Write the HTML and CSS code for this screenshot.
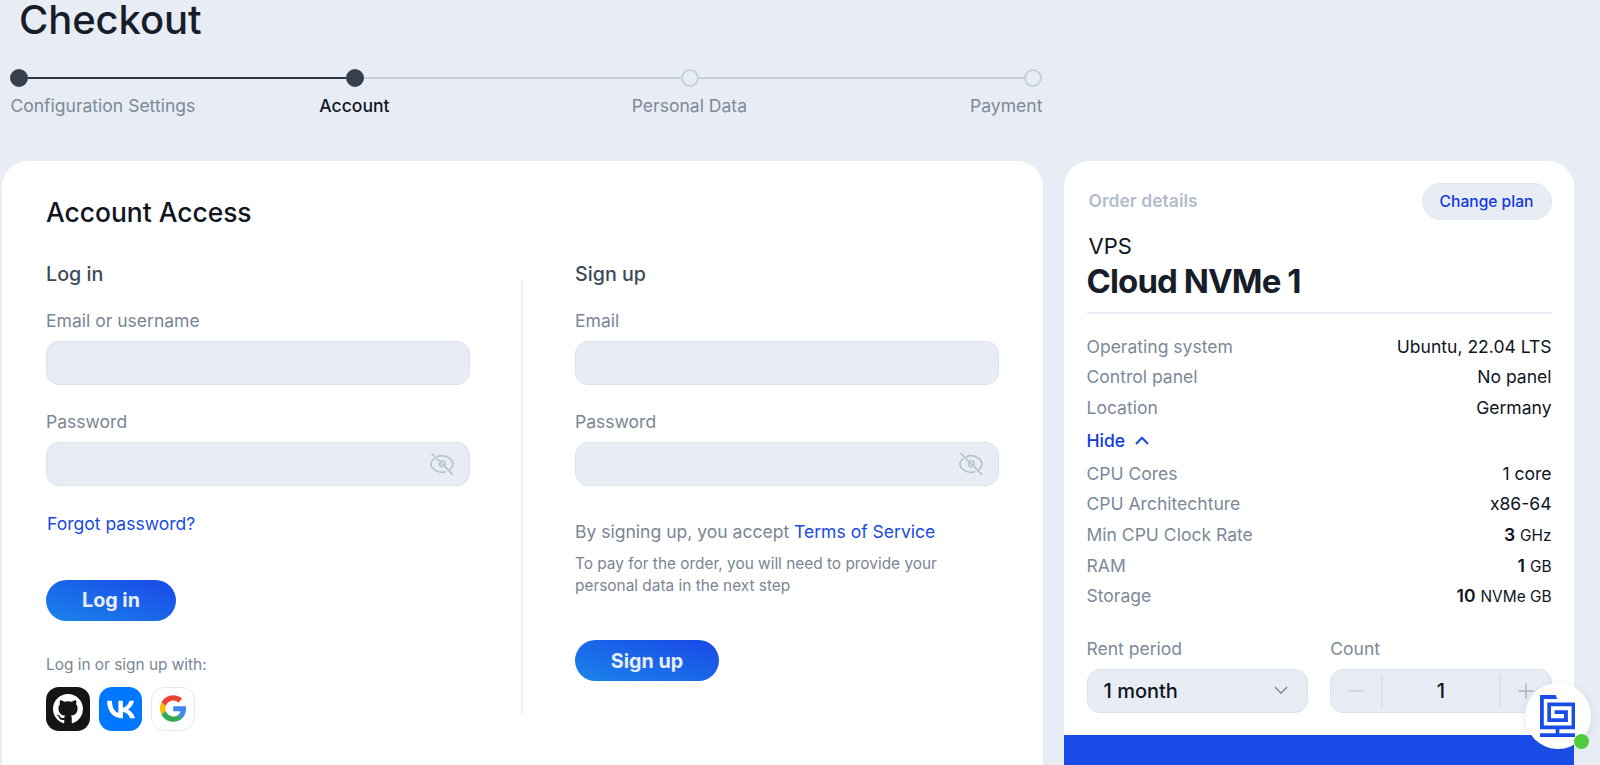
FILE: index.html
```html
<!DOCTYPE html>
<html lang="en">
<head>
    <meta charset="UTF-8">
    <meta name="viewport" content="width=device-width, initial-scale=1.0">
    <title>Checkout</title>
    <link rel="stylesheet" href="styles.css">
</head>
<body>

<svg class="sprite" aria-hidden="true">
    <symbol id="eye-off" viewBox="0 0 24 22">
        <path d="M2 .8L22.600 21.400M7.600 3.400C8.900 2.900 10.300 2.600 12 2.600c6 0 11 4.600 11 8.400 0 1.800-1.200 4-3.300 5.700M4 5.900C2.100 7.400 1 9.300 1 11c0 3.800 5 8.400 11 8.400 1.300 0 2.500-.2 3.600-.6M10.600 8.100C11 7.900 11.500 7.800 12 7.800c1.800 0 3.200 1.400 3.200 3.200 0 .4 0 .7-.2 1.100M9.500 10.500c-.3 1.700.9 3.300 2.700 3.400"/>
    </symbol>
</svg>

<h1 class="page-title">Checkout</h1>

<div class="stepper">
    <div class="track">
        <span class="dot done"></span>
        <span class="line done"></span>
        <span class="dot done"></span>
        <span class="line"></span>
        <span class="dot"></span>
        <span class="line last"></span>
        <span class="dot"></span>
    </div>
    <div class="step-labels">
        <span>Configuration Settings</span>
        <span class="current">Account</span>
        <span>Personal Data</span>
        <span>Payment</span>
    </div>
</div>

<main class="layout">
    <section class="card account">
        <h2 class="card-title">Account Access</h2>
        <div class="forms">
            <form class="form">
                <h3 class="form-title">Log in</h3>
                <div class="field">
                    <label for="login">Email or username</label>
                    <div class="input-box"><input type="text" id="login"></div>
                </div>
                <div class="field">
                    <label for="loginPassword">Password</label>
                    <div class="input-box">
                        <input type="password" id="loginPassword">
                        <svg class="eye"><use href="#eye-off"/></svg>
                    </div>
                </div>
                <a href="#" class="forgot">Forgot password?</a>
                <button type="button" class="btn btn-login">Log in</button>
                <p class="social-text">Log in or sign up with:</p>
                <div class="socials">
                    <a href="#" class="social github" aria-label="GitHub">
                        <svg width="30" height="30" viewBox="0 0 16 16"><path fill="#fff" d="M8 0C3.58 0 0 3.58 0 8c0 3.54 2.29 6.53 5.47 7.59.4.07.55-.17.55-.38 0-.19-.01-.82-.01-1.49-2.01.37-2.53-.49-2.69-.94-.09-.23-.48-.94-.82-1.13-.28-.15-.68-.52-.01-.53.63-.01 1.08.58 1.23.82.72 1.21 1.87.87 2.33.66.07-.52.28-.87.51-1.07-1.78-.2-3.64-.89-3.64-3.95 0-.87.31-1.59.82-2.15-.08-.2-.36-1.02.08-2.12 0 0 .67-.21 2.2.82.64-.18 1.32-.27 2-.27s1.36.09 2 .27c1.53-1.04 2.2-.82 2.2-.82.44 1.1.16 1.92.08 2.12.51.56.82 1.27.82 2.15 0 3.07-1.87 3.75-3.65 3.95.29.25.54.73.54 1.48 0 1.07-.01 1.93-.01 2.2 0 .21.15.46.55.38A8.01 8.01 0 0 0 16 8c0-4.42-3.58-8-8-8z"/></svg>
                    </a>
                    <a href="#" class="social vk" aria-label="VK">
                        <svg width="42" height="44" viewBox="0 0 48 48"><path fill="#fff" d="M25.54 34.58c-10.94 0-17.18-7.5-17.44-19.98h5.48c.18 9.16 4.22 13.04 7.42 13.84V14.6h5.16v7.9c3.16-.34 6.48-3.94 7.6-7.9h5.16c-.86 4.88-4.46 8.48-7.02 9.96 2.56 1.2 6.66 4.34 8.22 10.02h-5.68c-1.22-3.8-4.26-6.74-8.28-7.14v7.14z"/></svg>
                    </a>
                    <a href="#" class="social google" aria-label="Google">
                        <svg width="26" height="27" viewBox="0 0 47 48">
                            <path fill="#ea4335" d="M24 9.5c3.54 0 6.71 1.22 9.21 3.6l6.85-6.85C35.9 2.38 30.47 0 24 0 14.62 0 6.51 5.38 2.56 13.22l7.98 6.19C12.43 13.72 17.74 9.5 24 9.5z"/>
                            <path fill="#4285f4" d="M46.98 24.55c0-1.57-.15-3.09-.38-4.55H24v9.02h12.94c-.58 2.96-2.26 5.48-4.78 7.18l7.73 6c4.51-4.18 7.09-10.36 7.09-17.65z"/>
                            <path fill="#fbbc05" d="M10.53 28.59c-.48-1.45-.76-2.99-.76-4.59s.27-3.14.76-4.59l-7.98-6.19C.92 16.46 0 20.12 0 24c0 3.88.92 7.54 2.56 10.78l7.97-6.19z"/>
                            <path fill="#34a853" d="M24 48c6.48 0 11.93-2.13 15.89-5.81l-7.73-6c-2.15 1.45-4.92 2.3-8.16 2.3-6.26 0-11.57-4.22-13.47-9.91l-7.98 6.19C6.51 42.62 14.62 48 24 48z"/>
                        </svg>
                    </a>
                </div>
            </form>

            <div class="divider"></div>

            <form class="form">
                <h3 class="form-title">Sign up</h3>
                <div class="field">
                    <label for="email">Email</label>
                    <div class="input-box"><input type="text" id="email"></div>
                </div>
                <div class="field">
                    <label for="signupPassword">Password</label>
                    <div class="input-box">
                        <input type="password" id="signupPassword">
                        <svg class="eye"><use href="#eye-off"/></svg>
                    </div>
                </div>
                <p class="terms">By signing up, you accept <a href="#">Terms of Service</a></p>
                <p class="note">To pay for the order, you will need to provide your personal data in the next step</p>
                <button type="button" class="btn btn-signup">Sign up</button>
            </form>
        </div>
    </section>

    <aside class="card order">
        <div class="order-body">
            <div class="order-head">
                <span class="order-caption">Order details</span>
                <button type="button" class="change-plan">Change plan</button>
            </div>
            <div class="product-type">VPS</div>
            <h2 class="product-name">Cloud NVMe 1</h2>
            <dl class="specs">
                <div><dt>Operating system</dt><dd>Ubuntu, 22.04 LTS</dd></div>
                <div><dt>Control panel</dt><dd>No panel</dd></div>
                <div><dt>Location</dt><dd>Germany</dd></div>
            </dl>
            <a href="#" class="toggle">Hide
                <svg width="14" height="9" viewBox="0 0 14 9"><path d="M1 8l6-6.2L13 8"/></svg>
            </a>
            <dl class="specs">
                <div><dt>CPU Cores</dt><dd>1 core</dd></div>
                <div><dt>CPU Architechture</dt><dd>x86-64</dd></div>
                <div><dt>Min CPU Clock Rate</dt><dd><b>3</b> <small>GHz</small></dd></div>
                <div><dt>RAM</dt><dd><b>1</b> <small>GB</small></dd></div>
                <div><dt>Storage</dt><dd><b>10</b> <small>NVMe GB</small></dd></div>
            </dl>
            <div class="options">
                <div class="option">
                    <span class="option-label">Rent period</span>
                    <div class="select">1 month
                        <svg width="14" height="9" viewBox="0 0 14 9"><path d="M1 1l6 6.2L13 1"/></svg>
                    </div>
                </div>
                <div class="option">
                    <span class="option-label">Count</span>
                    <div class="counter">
                        <span class="count-btn minus"><svg width="16" height="16" viewBox="0 0 16 16"><path d="M.5 8h15"/></svg></span>
                        <span class="count-value">1</span>
                        <span class="count-btn"><svg width="16" height="16" viewBox="0 0 16 16"><path d="M.5 8h15M8 .5v15"/></svg></span>
                    </div>
                </div>
            </div>
        </div>
        <div class="order-total"></div>
    </aside>
</main>

<!-- Support chat -->
<div class="chat">
    <svg width="35.5" height="42" viewBox="0 0 35.5 42">
        <path d="M15.700 0H0V34.200H35.500V7.400H7.300V27H27.900V15.200H14.600V19H24V23.200H11V11.200H31.600V30.500H3.800V4H17.200z"/>
        <path d="M15.700 34h3.600v4.200h16.200V42H0v-3.800h15.700z"/>
    </svg>
    <span class="online"></span>
</div>

</body>
</html>
```
FILE: styles.css
```css
* {
    box-sizing: border-box;
}

body {
    margin: 0;
    height: 765px;
    overflow: hidden;
    background-color: #e8edf5;
    font-family: Inter, "Liberation Sans", sans-serif;
    font-size: 17.55px;
    line-height: 24px;
    color: #10141f;
}

h1, h2, h3, p, dl, dd {
    margin: 0;
}

a {
    color: #1a4be0;
    text-decoration: none;
}

.sprite {
    display: none;
}

.page-title {
    padding-left: 19px;
    font-size: 40px;
    line-height: 40px;
    font-weight: 550;
    letter-spacing: -0.1px;
    color: #181e29;
}

/* Stepper */
.stepper {
    width: 1032px;
    margin: 29px 0 42.5px 10.4px;
}

.track {
    display: flex;
    align-items: center;
}

.dot {
    flex: none;
    width: 18px;
    height: 18px;
    border: 2px solid #c7cfde;
    border-radius: 50%;
}

.dot.done {
    border-color: #37404e;
    background-color: #37404e;
}

.line {
    flex: 0 0 317.3px;
    height: 2.5px;
    background-color: #c7cfde;
}

.line.done {
    background-color: #2b3747;
}

.line.last {
    flex: 1;
}

.step-labels {
    display: grid;
    grid-template-columns: 176.5px 335px 335px 185.5px;
    margin-top: 7px;
    padding-bottom: 0.5px;
    text-align: center;
    white-space: nowrap;
    color: #7d8998;
}

.step-labels span:first-child {
    text-align: left;
}

.step-labels span:last-child {
    text-align: right;
}

.step-labels .current {
    font-weight: 550;
    color: #10141f;
}

/* Cards */
.layout {
    display: flex;
    align-items: flex-start;
    gap: 21px;
    padding-left: 2px;
}

.card {
    flex: none;
    height: 640px;
    border-radius: 26px;
    background-color: #fff;
}

.account {
    width: 1041px;
    padding: 35px 44px 0;
}

.card-title {
    font-size: 26.4px;
    line-height: 32px;
    font-weight: 550;
}

.forms {
    display: flex;
    margin-top: 33.5px;
}

.form {
    width: 423.5px;
}

.divider {
    width: 2px;
    height: 433px;
    margin: 18px 52.5px 0 51px;
    background-color: #e8edf5;
}

.form-title {
    margin-bottom: 23.5px;
    font-size: 19.7px;
    line-height: 24px;
    font-weight: 550;
    color: #3c4a5a;
}

.field {
    margin-bottom: 25px;
    color: #7b8594;
}

.field label {
    display: block;
    margin-bottom: 8px;
}

.input-box {
    display: flex;
    align-items: center;
    height: 44px;
    padding: 0 15px;
    border: 1.5px solid #dae2ee;
    border-radius: 13px;
    background-color: #e8edf5;
}

.input-box input {
    flex: 1;
    min-width: 0;
    border: none;
    outline: none;
    background: none;
    font: inherit;
}

.eye {
    width: 24px;
    height: 22px;
    fill: none;
    stroke: #b9c0ce;
    stroke-width: 1.6;
    stroke-linecap: round;
}

.forgot {
    display: block;
    margin: 26px 0 0 1px;
}

.btn {
    display: block;
    height: 41px;
    padding: 0;
    border: none;
    border-radius: 21px;
    background: linear-gradient(to top right, #1a84ea 0%, #1a4be8 95%);
    font-family: inherit;
    font-size: 19.7px;
    font-weight: 700;
    color: #e6edfa;
    cursor: pointer;
}

.btn-login {
    width: 130px;
    margin-top: 43.5px;
}

.btn-signup {
    width: 144px;
    margin-top: 43.5px;
}

.social-text {
    margin: 34.5px 0 11.5px;
    font-size: 15.4px;
    line-height: 20px;
    color: #7b8594;
}

.socials {
    display: flex;
    gap: 9px;
}

.social {
    display: flex;
    align-items: center;
    justify-content: center;
    width: 43.7px;
    height: 44px;
    border-radius: 13px;
}

.github {
    background-color: #161514;
}

.vk {
    background-color: #0077ff;
}

.google {
    border: 1px solid #e2e8f1;
}

.terms {
    margin-top: 34px;
    color: #7b8594;
}

.note {
    margin-top: 8.5px;
    width: 380px;
    font-size: 15.4px;
    line-height: 22px;
    color: #7b8594;
}

/* Order */
.order {
    width: 510px;
    overflow: hidden;
}

.order-body {
    height: 573.5px;
    padding: 22px 22.5px 0 22.5px;
}

.order-head {
    display: flex;
    justify-content: space-between;
    margin-bottom: 12px;
}

.order-caption {
    margin: 6px 0 0 2px;
    font-weight: 600;
    color: #b3bcc9;
}

.change-plan {
    width: 130px;
    height: 37px;
    padding: 0;
    border: 1px solid #dfe6f0;
    border-radius: 19px;
    background-color: #e8edf5;
    font-family: inherit;
    font-size: 15.6px;
    font-weight: 500;
    color: #1238e0;
}

.product-type {
    padding-left: 2px;
    font-size: 22px;
    line-height: 28px;
}

.product-name {
    margin-bottom: 17.5px;
    padding: 1px 0 11px;
    border-bottom: 2px solid #e8eef5;
    font-size: 33px;
    line-height: 40px;
    font-weight: 700;
    letter-spacing: -0.9px;
    color: #181e29;
}

.specs div {
    display: flex;
    justify-content: space-between;
    line-height: 30.7px;
}

.specs dt {
    color: #7d8998;
}

.specs b {
    font-weight: 600;
}

/* keeps the smaller unit from stretching its row */
.specs small {
    font-size: 15.4px;
    line-height: 1;
}

.toggle {
    display: flex;
    align-items: center;
    gap: 10px;
    margin: 5px 0 6px;
    font-weight: 500;
    color: #1238e0;
}

.toggle svg,
.select svg {
    fill: none;
    stroke: #1a4be0;
    stroke-width: 2;
}

.options {
    display: flex;
    gap: 22.5px;
    margin-top: 24.5px;
}

.option {
    flex: 1;
}

.option-label {
    display: block;
    margin-bottom: 8px;
    color: #7d8998;
}

.select,
.counter {
    display: flex;
    align-items: center;
    height: 44px;
    border: 1.5px solid #dae2ee;
    border-radius: 13px;
    background-color: #e8edf5;
    font-size: 20px;
    font-weight: 500;
}

.select {
    justify-content: space-between;
    padding: 0 19px 0 16px;
}

.select svg {
    stroke: #7d8998;
    stroke-width: 1.5;
}

.count-btn {
    display: flex;
    align-items: center;
    justify-content: center;
    width: 50px;
    height: 100%;
}

.count-btn svg {
    stroke: #a9b3c2;
    stroke-width: 1.5;
}

.count-btn.minus svg {
    stroke: #c7cfdc;
}

.count-value {
    flex: 1;
    line-height: 34px;
    border: solid #dae2ee;
    border-width: 0 2px;
    text-align: center;
}

.order-total {
    height: 80px;
    background-color: #1a4de8;
}

/* Chat button lies over the page */
.chat {
    position: fixed;
    right: 9px;
    bottom: 16px;
    display: flex;
    align-items: center;
    justify-content: center;
    width: 66px;
    height: 66px;
    padding: 0 1px 1px 0;
    border-radius: 50%;
    background-color: #fff;
    box-shadow: 0 2px 10px rgba(40, 60, 100, 0.12);
}

.chat path {
    fill: #1a4de8;
}

.online {
    position: absolute;
    right: 2px;
    bottom: 0;
    width: 15px;
    height: 15px;
    border-radius: 50%;
    background-color: #4fcb3c;
}
```
